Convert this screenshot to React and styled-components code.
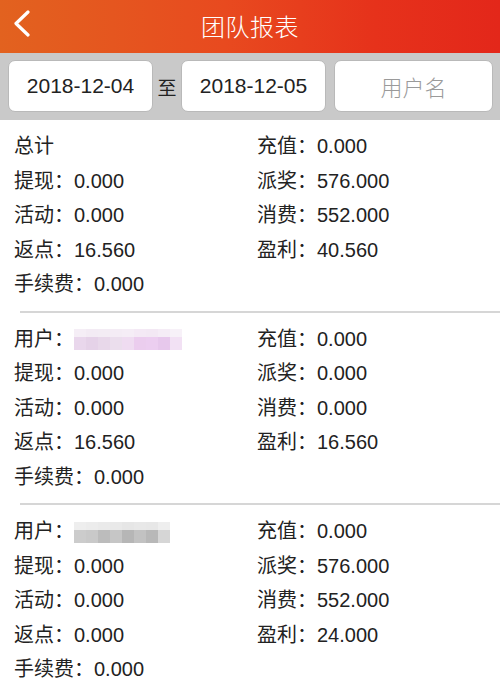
import React from 'react'
import styled, { createGlobalStyle } from 'styled-components'

const GlobalStyle = createGlobalStyle`
  html, body {
    margin: 0;
    padding: 0;
    background: #ffffff;
  }
  body {
    width: 500px;
    font-family: "Liberation Sans", "Noto Sans CJK SC", sans-serif;
    color: #222222;
  }
`

const Page = styled.div`
  width: 500px;
  min-height: 696px;
  background: #ffffff;
`

const Header = styled.header`
  position: relative;
  height: 53px;
  display: flex;
  align-items: center;
  justify-content: center;
  padding-bottom: 3px;
  box-sizing: border-box;
  background: linear-gradient(90deg, #e2621f 0%, #e84a1f 45%, #e6321b 75%, #e3271a 100%);
`

const Title = styled.h1`
  margin: 0;
  font-family: "Noto Sans CJK SC", sans-serif;
  font-size: 24px;
  font-weight: 300;
  color: #ffffff;
  letter-spacing: 0.5px;
`

const BackButton = styled.button`
  position: absolute;
  left: 8px;
  top: 7px;
  width: 28px;
  height: 32px;
  padding: 0;
  border: 0;
  background: transparent;
  display: flex;
  align-items: center;
  justify-content: center;
`

const FilterBar = styled.div`
  display: flex;
  align-items: center;
  padding: 7px 7px 8px 8px;
  background: #c9c9c9;
  height: 67px;
  box-sizing: border-box;
`

const Field = styled.div`
  flex: ${p => (p.$grow ? 1 : 'none')};
  width: ${p => (p.$grow ? 'auto' : '145px')};
  height: 52px;
  box-sizing: border-box;
  background: #ffffff;
  border: 1px solid #b9b9b9;
  border-radius: 7px;
  display: flex;
  align-items: center;
  justify-content: center;
  font-size: ${p => (p.$placeholder ? '22px' : '21px')};
  font-weight: 300;
  color: ${p => (p.$placeholder ? '#9a9a9a' : '#222222')};
`

const To = styled.span`
  width: 28px;
  text-align: center;
  font-family: "Noto Sans CJK SC", sans-serif;
  font-size: 19px;
  color: #222222;
`

const Spacer = styled.span`
  width: 8px;
`

const Block = styled.section`
  padding: 9px 0 9px 14px;
  display: grid;
  grid-template-columns: 243px 1fr;
  font-size: 20px;
  line-height: 34.5px;
`

const Divider = styled.div`
  margin-left: 20px;
  height: 2px;
  background: #d6d6d6;
`

const Cell = styled.div`
  display: flex;
  align-items: center;
  white-space: nowrap;
  height: 34.5px;
`

const Mosaic = styled.span`
  display: inline-flex;
  flex-direction: column;
  margin-top: 2px;
`

const MosaicRow = styled.span`
  display: flex;
`

const MosaicCell = styled.span`
  width: 12px;
  height: ${p => p.$h}px;
`

const pink = {
  top: ['#f5eef6', '#f3ebf4', '#f3ecf4', '#f4ecf5', '#f5edf6', '#f4e9f5', '#f3e8f4', '#f5ecf6', '#f7f1f8'],
  bottom: ['#e9d7ec', '#e5d2e8', '#e8d8ea', '#ebdeed', '#efdcf1', '#ebcdee', '#eccef0', '#e7c8ec', '#f2e1f4'],
}
const gray = {
  top: ['#eeeeee', '#ececec', '#eaeaea', '#e9e9e9', '#e6e6e6', '#e8e8e8', '#e7e7e7', '#eeeeee'],
  bottom: ['#cccccc', '#c9c9c9', '#bcbcbc', '#c6c6c6', '#b6b6b6', '#c2c2c2', '#b8b8b8', '#d6d6d6'],
}

const Blurred = ({ colors }) => (
  <Mosaic>
    <MosaicRow>
      {colors.top.map((c, i) => (
        <MosaicCell key={i} $h={8} style={{ background: c }} />
      ))}
    </MosaicRow>
    <MosaicRow>
      {colors.bottom.map((c, i) => (
        <MosaicCell key={i} $h={13} style={{ background: c }} />
      ))}
    </MosaicRow>
  </Mosaic>
)

const blocks = [
  {
    head: '总计',
    rows: [
      ['充值', '0.000'],
      ['提现', '0.000', '派奖', '576.000'],
      ['活动', '0.000', '消费', '552.000'],
      ['返点', '16.560', '盈利', '40.560'],
    ],
  },
  {
    user: pink,
    rows: [
      ['充值', '0.000'],
      ['提现', '0.000', '派奖', '0.000'],
      ['活动', '0.000', '消费', '0.000'],
      ['返点', '16.560', '盈利', '16.560'],
    ],
  },
  {
    user: gray,
    rows: [
      ['充值', '0.000'],
      ['提现', '0.000', '派奖', '576.000'],
      ['活动', '0.000', '消费', '552.000'],
      ['返点', '0.000', '盈利', '24.000'],
    ],
  },
]

const Report = ({ block }) => {
  const [first, ...rest] = block.rows
  return (
    <Block>
      <Cell>
        {block.head ? block.head : (
          <>
            用户：
            <Blurred colors={block.user} />
          </>
        )}
      </Cell>
      <Cell>{first[0]}：{first[1]}</Cell>
      {rest.map((r, i) => (
        <React.Fragment key={i}>
          <Cell>{r[0]}：{r[1]}</Cell>
          <Cell>{r[2]}：{r[3]}</Cell>
        </React.Fragment>
      ))}
      <Cell>手续费：0.000</Cell>
    </Block>
  )
}

export default function App() {
  return (
    <Page>
      <GlobalStyle />
      <Header>
        <BackButton aria-label="返回">
          <svg width="20" height="28" viewBox="0 0 20 28" fill="none">
            <polyline points="16,3 4,14.5 16,26" stroke="#ffffff" strokeWidth="3.2" strokeLinecap="round" strokeLinejoin="round" />
          </svg>
        </BackButton>
        <Title>团队报表</Title>
      </Header>
      <FilterBar>
        <Field>2018-12-04</Field>
        <To>至</To>
        <Field>2018-12-05</Field>
        <Spacer />
        <Field $grow $placeholder>用户名</Field>
      </FilterBar>
      {blocks.map((b, i) => (
        <React.Fragment key={i}>
          {i > 0 && <Divider />}
          <Report block={b} />
        </React.Fragment>
      ))}
    </Page>
  )
}
